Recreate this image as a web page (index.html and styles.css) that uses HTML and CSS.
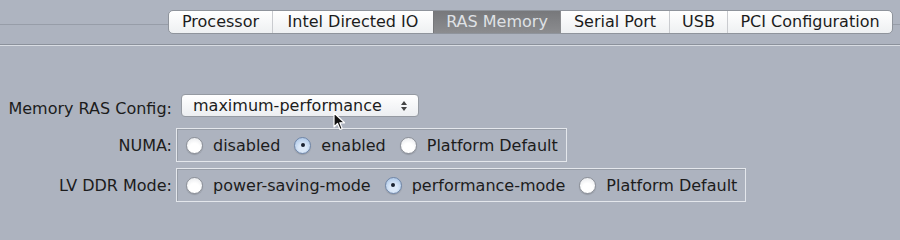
FILE: index.html
```html
<!DOCTYPE html>
<html>
<head>
<meta charset="utf-8">
<link rel="stylesheet" href="styles.css">
</head>
<body>
<div class="window">
  <div class="header">
    <div class="tabs">
      <div class="tab t-proc">Processor</div>
      <div class="tab t-io">Intel Directed IO</div>
      <div class="tab t-ras selected">RAS Memory</div>
      <div class="tab t-serial">Serial Port</div>
      <div class="tab t-usb">USB</div>
      <div class="tab t-pci">PCI Configuration</div>
    </div>
  </div>
  <div class="form">
    <div class="label">Memory RAS Config:</div>
    <div class="field">
      <div class="select">
        <span>maximum-performance</span>
        <svg class="arrows" width="8" height="12" viewBox="0 0 8 12"><path d="M4 1 L7 5 L1 5 Z M4 11 L7 7 L1 7 Z" fill="#444"/></svg>
      </div>
    </div>
    <div class="label">NUMA:</div>
    <div class="field">
      <div class="group">
        <div class="opt"><span class="radio"></span>disabled</div>
        <div class="opt"><span class="radio on"></span>enabled</div>
        <div class="opt"><span class="radio"></span>Platform Default</div>
      </div>
    </div>
    <div class="label">LV DDR Mode:</div>
    <div class="field">
      <div class="group">
        <div class="opt"><span class="radio"></span>power-saving-mode</div>
        <div class="opt"><span class="radio on"></span>performance-mode</div>
        <div class="opt"><span class="radio"></span>Platform Default</div>
      </div>
    </div>
  </div>
  <svg class="cursor" width="13" height="20" viewBox="0 0 13 20"><path d="M1 1 L1 15 L4.5 11.5 L7 17.5 L9.2 16.6 L6.8 10.8 L11.5 10.8 Z" fill="#111" stroke="#fff" stroke-width="1.2" stroke-linejoin="round"/></svg>
</div>
</body>
</html>
```

FILE: styles.css
```css
html, body {
  margin: 0;
  padding: 0;
}
body {
  width: 900px;
  height: 206px;
  overflow: hidden;
  background: #adb3bf;
  font-family: "DejaVu Sans", "Liberation Sans", sans-serif;
  font-size: 16px;
  color: #1c1c1c;
}
.window {
  position: relative;
  width: 900px;
  height: 206px;
}
.header {
  height: 45px;
  box-sizing: border-box;
  border-bottom: 1px solid #8b919b;
  box-shadow: 0 1px 0 #d9dde3;
  background: linear-gradient(to bottom, #aeb4c0 0, #aeb4c0 24px, #979da8 24px, #979da8 25px, #adb3bf 25px);
  display: flex;
  justify-content: flex-end;
  align-items: flex-start;
  padding: 10px 7px 0 0;
}
.tabs {
  display: flex;
  height: 24px;
  box-sizing: border-box;
  border: 1px solid #8f949c;
  border-radius: 5px;
  overflow: hidden;
  background: linear-gradient(to bottom, #ffffff, #eef0f2);
}
.tab {
  box-sizing: border-box;
  text-align: center;
  line-height: 22px;
  border-left: 1px solid #c9cbcf;
  white-space: nowrap;
}
.tab:first-child {
  border-left: none;
}
.t-proc { width: 103px; }
.t-io { width: 161px; }
.t-ras { width: 127px; }
.t-serial { width: 109px; }
.t-usb { width: 58px; }
.t-pci { width: 165px; }
.tab.selected {
  background: linear-gradient(to bottom, #77787b, #8b8c8f);
  color: #dfe1e5;
  border-left-color: #77787b;
}
.tab.selected + .tab {
  border-left-color: #8b8c8f;
}
.form {
  display: grid;
  grid-template-columns: 172px auto;
  column-gap: 4px;
  row-gap: 6px;
  padding-top: 49px;
  align-items: center;
}
.label {
  text-align: right;
  white-space: nowrap;
}
.field {
  display: flex;
}
.select {
  margin-left: 5px;
  width: 238px;
  height: 23px;
  box-sizing: border-box;
  border: 1px solid #959aa2;
  border-radius: 4px;
  background: linear-gradient(to bottom, #ffffff, #eceef1);
  display: flex;
  align-items: center;
  justify-content: space-between;
  padding: 0 10px 0 11px;
  margin-bottom: 5px;
}
.arrows {
  display: block;
}
.group {
  display: flex;
  align-items: center;
  gap: 14px;
  height: 34px;
  box-sizing: border-box;
  border: 1px solid #e4e7ec;
  box-shadow: inset 1px 1px 0 #989ea8;
  padding: 0 8px 0 9px;
}
.opt {
  display: flex;
  align-items: center;
  white-space: nowrap;
}
.radio {
  width: 17px;
  height: 17px;
  box-sizing: border-box;
  border-radius: 50%;
  border: 1px solid #8c9098;
  background: radial-gradient(circle at 50% 70%, #ffffff 40%, #e2e4e8 100%);
  box-shadow: 0 1px 1px rgba(0,0,0,0.15);
  margin-right: 10px;
  position: relative;
  flex: none;
}
.radio.on {
  border-color: #6f86a8;
  background: radial-gradient(circle at 50% 65%, #dbe8f8 30%, #9fbde2 100%);
}
.radio.on::after {
  content: "";
  position: absolute;
  left: 5.5px;
  top: 5.5px;
  width: 4px;
  height: 4px;
  border-radius: 50%;
  background: #1a2230;
}
.cursor {
  position: absolute;
  left: 333px;
  top: 112px;
}
```
